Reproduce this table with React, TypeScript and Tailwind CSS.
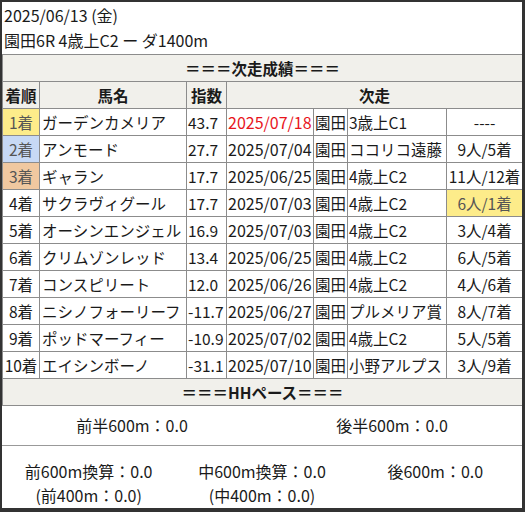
import React from "react";

type Row = {
  rank: string;
  rankBg?: string;
  name: string;
  index: string;
  date: string;
  dateRed?: boolean;
  venue: string;
  race: string;
  result: string;
  resultBg?: string;
};

const ROWS: Row[] = [
  { rank: "1着", rankBg: "bg-[#fdec8a] text-[#555]", name: "ガーデンカメリア", index: "43.7", date: "2025/07/18", dateRed: true, venue: "園田", race: "3歳上C1", result: "----" },
  { rank: "2着", rankBg: "bg-[#c7d9f5] text-[#555]", name: "アンモード", index: "27.7", date: "2025/07/04", venue: "園田", race: "ココリコ遠藤", result: "9人/5着" },
  { rank: "3着", rankBg: "bg-[#f0c8a0] text-[#555]", name: "ギャラン", index: "17.7", date: "2025/06/25", venue: "園田", race: "4歳上C2", result: "11人/12着" },
  { rank: "4着", name: "サクラヴィグール", index: "17.7", date: "2025/07/03", venue: "園田", race: "4歳上C2", result: "6人/1着", resultBg: "bg-[#fdec8a] text-[#555]" },
  { rank: "5着", name: "オーシンエンジェル", index: "16.9", date: "2025/07/03", venue: "園田", race: "4歳上C2", result: "3人/4着" },
  { rank: "6着", name: "クリムゾンレッド", index: "13.4", date: "2025/06/25", venue: "園田", race: "4歳上C2", result: "6人/5着" },
  { rank: "7着", name: "コンスピリート", index: "12.0", date: "2025/06/26", venue: "園田", race: "4歳上C2", result: "4人/6着" },
  { rank: "8着", name: "ニシノフォーリーフ", index: "-11.7", date: "2025/06/27", venue: "園田", race: "プルメリア賞", result: "8人/7着" },
  { rank: "9着", name: "ポッドマーフィー", index: "-10.9", date: "2025/07/02", venue: "園田", race: "4歳上C2", result: "5人/5着" },
  { rank: "10着", name: "エイシンボーノ", index: "-31.1", date: "2025/07/10", venue: "園田", race: "小野アルプス", result: "3人/9着" },
];

const CELL = "border border-[#8c8c8c] h-[27px] p-0 whitespace-nowrap overflow-hidden";

export default function App() {
  return (
    <div
      className="w-[525px] h-[512px] bg-white border-l-2 border-t-2 border-r-[3px] border-b-[4px] border-[#333] text-[16px] text-[#1a1a1a] leading-[25px] overflow-hidden"
      style={{ fontFamily: '"Noto Sans CJK JP", "Noto Sans", sans-serif' }}
    >
      <div className="px-[2px] pt-[1px] h-[52px]">
        <div>2025/06/13 (金)</div>
        <div>園田6R 4歳上C2 ー ダ1400m</div>
      </div>

      <table className="table-fixed border-collapse w-[520px] text-[15.5px]">
        <colgroup>
          <col className="w-[37px]" />
          <col className="w-[147px]" />
          <col className="w-[40px]" />
          <col className="w-[87px]" />
          <col className="w-[34px]" />
          <col className="w-[99px]" />
          <col className="w-[76px]" />
        </colgroup>
        <tbody>
          <tr className="bg-[#f1f0eb]">
            <td colSpan={7} className={`${CELL} text-center font-bold`}>
              ＝＝＝次走成績＝＝＝
            </td>
          </tr>
          <tr className="bg-[#f1f0eb] font-bold">
            <td className={`${CELL} text-center`}>着順</td>
            <td className={`${CELL} text-center`}>馬名</td>
            <td className={`${CELL} text-center`}>指数</td>
            <td colSpan={4} className={`${CELL} text-center`}>
              次走
            </td>
          </tr>
          {ROWS.map((r) => (
            <tr key={r.rank}>
              <td className={`${CELL} text-center ${r.rankBg ?? ""}`}>{r.rank}</td>
              <td className={`${CELL} pl-[2px]`}>{r.name}</td>
              <td className={`${CELL} pl-[1px]`}>{r.index}</td>
              <td className={`${CELL} pl-[1px] text-[16px] ${r.dateRed ? "text-[#e8141c]" : ""}`}>{r.date}</td>
              <td className={`${CELL} pl-[1px]`}>{r.venue}</td>
              <td className={`${CELL} pl-[1px]`}>{r.race}</td>
              <td className={`${CELL} text-center ${r.resultBg ?? ""}`}>{r.result}</td>
            </tr>
          ))}
          <tr className="bg-[#f1f0eb]">
            <td colSpan={7} className={`${CELL} h-[26px] text-center font-bold`}>
              ＝＝＝HHペース＝＝＝
            </td>
          </tr>
        </tbody>
      </table>

      <div className="grid grid-cols-2 h-[40px] items-center border-b border-[#999] text-center">
        <div>前半600m：0.0</div>
        <div>後半600m：0.0</div>
      </div>

      <div className="grid grid-cols-3 pt-[13px] text-center leading-[24px]">
        <div>
          <div>前600m換算：0.0</div>
          <div>(前400m：0.0)</div>
        </div>
        <div>
          <div>中600m換算：0.0</div>
          <div>(中400m：0.0)</div>
        </div>
        <div>
          <div>後600m：0.0</div>
        </div>
      </div>
    </div>
  );
}
